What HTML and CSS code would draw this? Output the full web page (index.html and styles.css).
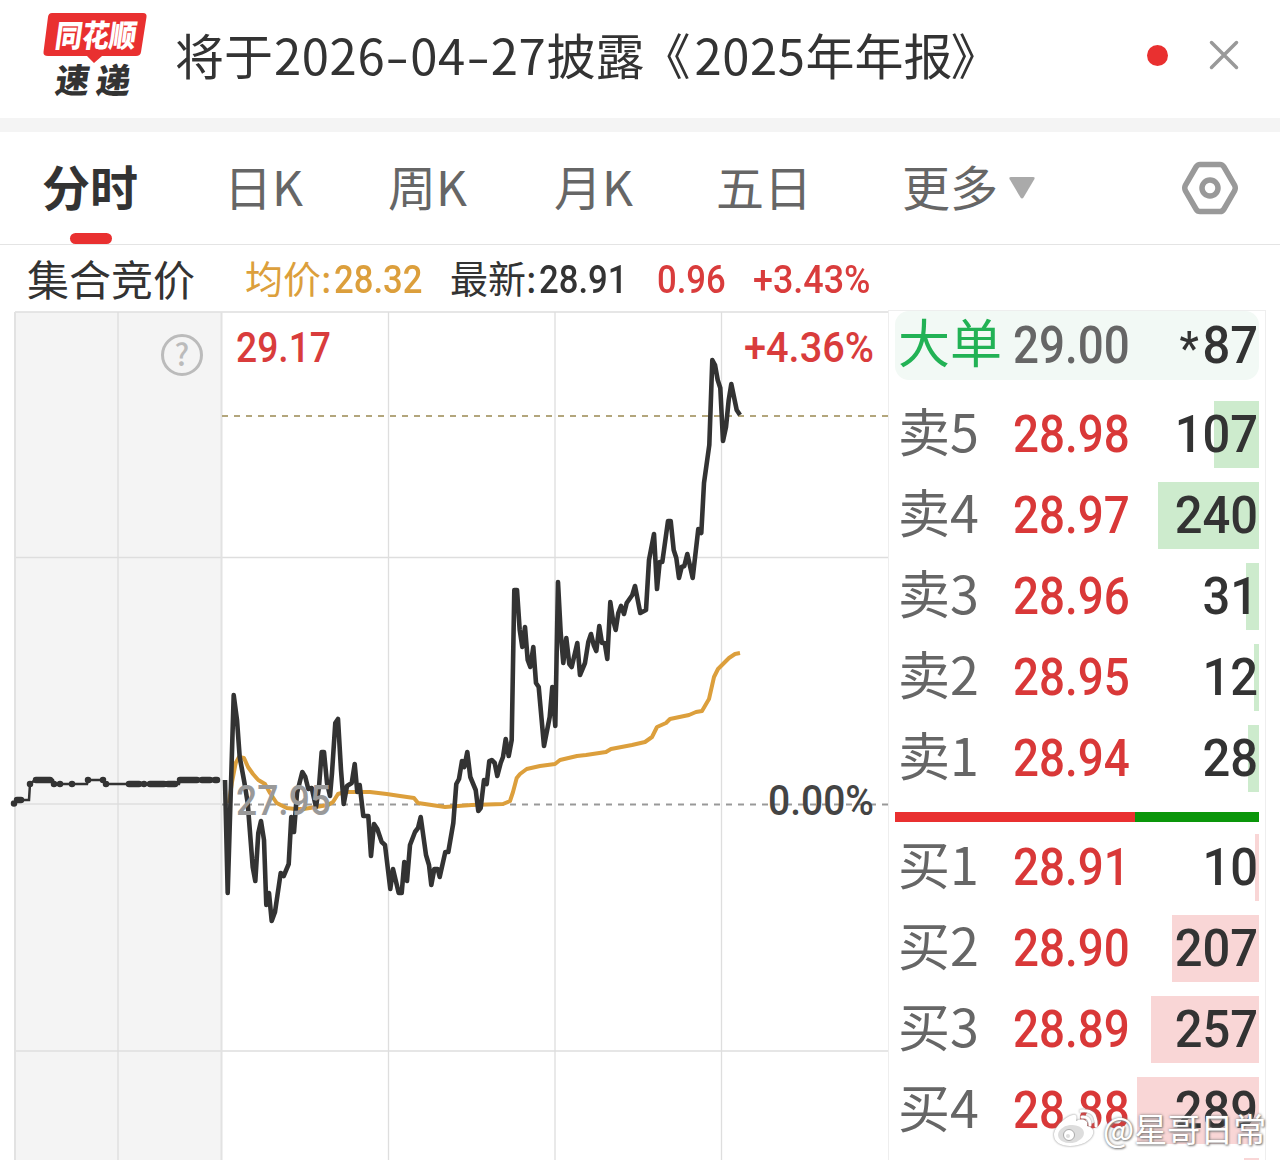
FILE: index.html
```html
<!DOCTYPE html>
<html lang="zh-CN">
<head>
  <meta charset="UTF-8">
  <meta name="viewport" content="width=device-width, initial-scale=1.0">
  <title>分时</title>
  <link rel="stylesheet" href="styles.css">
</head>
<body>
  <header class="notice">
    <svg class="logo" width="106" height="90" viewBox="0 0 106 90">
      <path class="logo-bubble" d="M10 3H101Q105 3 104.500 7L99 42Q98.500 46 94 46H60L52 53L45 46H6Q1 46 1.500 42L6 7Q6.500 3 10 3Z"/>
      <text class="logo-top" transform="translate(12 37) skewX(-8)" textLength="81" lengthAdjust="spacingAndGlyphs">同花顺</text>
      <text class="logo-bottom" transform="translate(12 83) skewX(-8)" textLength="34" lengthAdjust="spacingAndGlyphs">速</text>
      <text class="logo-bottom" transform="translate(53 83) skewX(-8)" textLength="34" lengthAdjust="spacingAndGlyphs">递</text>
    </svg>
    <p class="notice-text">将于<span class="date">2026<i>-</i>04<i>-</i>27</span>披露<span class="quote-open">《</span><span class="date">2025</span>年年报<span class="quote-close">》</span></p>
    <span class="dot"></span>
    <svg class="close" width="30" height="30" viewBox="0 0 30 30"><path d="M2.500 2.500L27.500 27.500M27.500 2.500L2.500 27.500"/></svg>
  </header>

  <nav class="tabs">
    <a class="tab active">分时</a>
    <a class="tab">日K</a>
    <a class="tab">周K</a>
    <a class="tab">月K</a>
    <a class="tab">五日</a>
    <a class="tab more">更多<svg width="26" height="22" viewBox="0 0 26 22"><path d="M2 0H24Q26.500 0 25.300 2.300L14.500 20.500Q13 22.500 11.500 20.500L.7 2.300Q-.5 0 2 0Z"/></svg></a>
    <svg class="settings" width="58" height="54" viewBox="0 0 58 54">
      <path d="M19 3.500H39Q41.500 3.500 43 6L53.500 24Q55 27 53.500 30L43 48Q41.500 50.500 39 50.500H19Q16.500 50.500 15 48L4.500 30Q3 27 4.500 24L15 6Q16.500 3.500 19 3.500Z"/>
      <circle cx="29" cy="27" r="8"/>
    </svg>
  </nav>

  <div class="summary">
    <span class="auction">集合竞价</span>
    <span class="average">均价:<b>28.32</b></span>
    <span class="latest">最新:<b>28.91</b></span>
    <span class="change"><b>0.96</b></span>
    <span class="percent"><b>+3.43%</b></span>
  </div>

  <main class="quote-body">
    <svg class="chart" width="888" height="850" viewBox="0 310 888 850">
      <!-- call auction area -->
      <rect class="auction-bg" x="15" y="312" width="206" height="860"/>
      <path class="grid" d="M15 312H888M15 557.500H888M15 804H222M15 1051H888M118 312V1160M388.500 312V1160M555 312V1160M721.500 312V1160"/>
      <path class="grid-strong" d="M15 312V1160M221.500 312V1160"/>
      <path class="dash latest-dash" d="M222 416H888"/>
      <path class="dash" d="M222 804.500H888"/>

      <g class="help">
        <circle cx="182" cy="355" r="19.500"/>
        <text x="182" y="365.500" text-anchor="middle">?</text>
      </g>

      <polyline class="auction-line" points="14,803 17,800 29,800 30,784 35,780 53,780 54,784 87,784 88,780 103,780 106,784 179,784 180,780 218,780"/>
      <path class="auction-dots" d="M14 803.500h0M17 800h4M30 784h0M36 780h14M54 784h0M60 784h0M72 784h0M88 780h0M103 780h0M106 784h0M129 784h10M144 784h0M150 784h14M168 784h7M180 780h17M202 780h8M215 780h2"/>

      <polyline class="average-line" points="229,803 232,782 235.700,763 239,757 244,758 248,767 253,774 258.300,780 265,784 270,793 276.700,803 286.700,808 295,809 303.300,809 316,807 328,805 333,802 338,794 345,792 355,792 370,792 386.700,794 400,796 414,798 418,803 445,807 458,806 471.700,805 503,804 510,801 513,792 516.700,778 520,774 526.700,769 540,766 555,764 560,760 577,756 586,755 606,752 611,749 632,745 645,742 652,737 657,727 666,723 670,719 689,715 696,712 702,711 709,699 714,677 718,669 729,658 735,654 740,653"/>
      <polyline class="price-line" points="225,780 227.700,893 233.700,695 237,720 239.700,757 244.300,782 247.700,803 252.700,867 255.300,881 258.300,833 261,821 264,840 266.300,905 269,893 271.700,921 275,912 280.700,873 283.700,876 288.700,864 291.300,817 294,832 297,793 302.300,772 305.300,777 308.300,789 311.700,788 316,807 319,787 321.700,752 324,752 327,783 330,796 332,773 335.300,723 338,719 341,770 343.700,804 347,786 351.700,783 354.700,764 357.300,792 359.700,785 363.300,816 368.300,816 371,856 374,824 377.300,829 381.700,842 385,845 390.300,889 393,869 398.700,893 401.700,893 404.300,862 407,881 410,845 415,832 418,828 420.700,817 426,855 429,865 431.300,885 434.300,869 437.700,869 439.700,877 445.300,852 448.300,852 453.300,823 456.300,784 459,779 462,761 464.300,767 467.300,752 470.300,777 475.700,790 478.300,811 480.700,808 484,780 486.700,784 489.300,761 491.700,760 494.700,763 497.300,776 500.700,763 503,757 505.700,739 508.700,756 511.700,740 514.300,590 517,590 519.700,630 522.300,647 525,627 527.700,660 530.300,667 533.300,647 536,683 538.700,687 544,746 549.700,717 552.300,687 555.300,726 558,582 560.700,633 563.300,663 566.300,638 569.300,664 571.700,667 577.300,643 580,675 585,663 588.300,642 591,634 593.700,645 596.300,651 599.300,626 602,643 604.700,643 607.300,659 610.300,602 613,620 615.700,630 618.300,613 621,606 624,614 626.700,603 632.300,595 635,586 640.300,613 646,610 649,560 654,534 657,589 659.700,562 662.300,562 668,521 670.700,521 673.700,550 676.300,558 679,578 681.700,567 684.300,566 687.300,554 692.700,578 698.300,529 701.300,533 704,483 709.300,445 712.300,360 715,365 717.700,380 720.300,388 723,441 726,427 728.700,400 731.300,384 736.700,410 740,415"/>

      <text class="axis up" x="236" y="362" textLength="95" lengthAdjust="spacingAndGlyphs">29.17</text>
      <text class="axis up" x="744" y="362" textLength="130" lengthAdjust="spacingAndGlyphs">+4.36%</text>
      <text class="axis base" x="236" y="815" textLength="95" lengthAdjust="spacingAndGlyphs">27.95</text>
      <text class="axis" x="768" y="815" textLength="106" lengthAdjust="spacingAndGlyphs">0.00%</text>
    </svg>

    <section class="book">
      <div class="big-order"><span class="label">大单</span><span class="price">29.00</span><span class="amount"><small>*</small>87</span></div>
      <div class="row sell"><span class="label">卖5</span><span class="price">28.98</span><span class="amount">107</span><span class="bar" style="width: 45px"></span></div>
      <div class="row sell"><span class="label">卖4</span><span class="price">28.97</span><span class="amount">240</span><span class="bar" style="width: 101px"></span></div>
      <div class="row sell"><span class="label">卖3</span><span class="price">28.96</span><span class="amount">31</span><span class="bar" style="width: 13px"></span></div>
      <div class="row sell"><span class="label">卖2</span><span class="price">28.95</span><span class="amount">12</span><span class="bar" style="width: 5px"></span></div>
      <div class="row sell"><span class="label">卖1</span><span class="price">28.94</span><span class="amount">28</span><span class="bar" style="width: 11px"></span></div>
      <div class="ratio"><span class="ratio-buy" style="width: 66%"></span></div>
      <div class="row buy"><span class="label">买1</span><span class="price">28.91</span><span class="amount">10</span><span class="bar" style="width: 4px"></span></div>
      <div class="row buy"><span class="label">买2</span><span class="price">28.90</span><span class="amount">207</span><span class="bar" style="width: 87px"></span></div>
      <div class="row buy"><span class="label">买3</span><span class="price">28.89</span><span class="amount">257</span><span class="bar" style="width: 108px"></span></div>
      <div class="row buy"><span class="label">买4</span><span class="price">28.88</span><span class="amount">289</span><span class="bar" style="width: 122px"></span></div>
      <div class="row buy"><span class="bar" style="width: 15px"></span></div>
    </section>
  </main>

  <div class="watermark">
    <svg width="46" height="38" viewBox="0 0 46 38">
      <path class="wb-body" d="M20 6C24 5 24 9 23 12C29 9 36 11 34 17C39 18 41 21 40 25C38 32 28 37 17 37C8 37 1 33 1 26C1 18 13 7 20 6Z"/>
      <ellipse class="wb-eye" cx="18" cy="25" rx="13" ry="9" transform="rotate(-8 18 25)"/>
      <circle class="wb-pupil" cx="16" cy="26" r="5.500"/>
      <circle class="wb-eye" cx="15" cy="27" r="2"/>
      <path class="wb-wave" d="M29 8Q37 7 37 16M28 2Q44 0 43 17"/>
    </svg>
    <span>@星哥日常</span>
  </div>
</body>
</html>
```
FILE: styles.css
```css
* {
  box-sizing: border-box;
}

body {
  position: relative;
  width: 1280px;
  height: 1160px;
  margin: 0;
  overflow: hidden;
  background: #fff;
  color: #333;
  font-family: 'Noto Sans CJK SC', sans-serif;
}

/* Top notice */
.notice {
  display: flex;
  align-items: center;
  height: 132px;
  padding: 0 41px 8px 42px;
  border-bottom: 14px solid #f4f4f4;
}

.logo {
  flex: none;
  margin-right: 27px;
  overflow: visible;
}

.logo-bubble {
  fill: #e93030;
}

.logo-top {
  fill: #fff;
  font-size: 31px;
  font-weight: 900;
}

.logo-bottom {
  fill: #333;
  font-size: 34px;
  font-weight: 900;
}

.notice-text {
  flex: 1;
  margin: -2px 0 0;
  font-size: 49px;
  line-height: 72px;
  white-space: nowrap;
}

.date {
  margin-left: 1px;
  letter-spacing: 0.6px;
}

.date i {
  display: inline-block;
  width: 25px;
  font-style: normal;
  text-align: center;
  transform: scaleX(1.4);
}

.quote-open {
  margin: 0 3px 0 -3px;
}

.quote-close {
  margin-left: -2px;
}

.dot {
  width: 21px;
  height: 21px;
  margin-right: 41px;
  border-radius: 50%;
  background: #e93030;
}

.close path {
  fill: none;
  stroke: #999;
  stroke-width: 3.5;
  stroke-linecap: round;
}

/* Period tabs */
.tabs {
  display: grid;
  grid-template-columns: 182px 164px 166px 162px 186px 279px 58px;
  align-items: center;
  height: 113px;
  padding-left: 42px;
  border-bottom: 1px solid #e4e4e4;
}

.tab {
  display: flex;
  flex-direction: column;
  align-items: flex-start;
  height: 112px;
  padding-top: 17px;
  color: #666;
  font-size: 48px;
  line-height: 72px;
}

.tab.active {
  color: #333;
  font-weight: 700;
}

.tab.active::after {
  content: '';
  width: 42px;
  height: 11px;
  margin: 12px 0 0 28px;
  border-radius: 6px;
  background: #e93030;
}

.tab.more {
  flex-direction: row;
}

.more svg {
  margin: 28px 0 0 11px;
  fill: #aaa;
}

.settings {
  fill: none;
  stroke: #999;
  stroke-width: 5.5;
}

/* Price summary */
.summary {
  display: flex;
  height: 65px;
  padding-left: 27px;
  font-size: 38px;
  line-height: 64px;
  white-space: nowrap;
}

.summary b {
  display: inline-block;
  margin-left: 2px;
  font-family: Roboto, sans-serif;
  font-size: 39px;
  font-weight: 500;
  transform: scaleX(0.89);
  transform-origin: left;
}

.auction {
  width: 218px;
  font-size: 42px;
  line-height: 66px;
}

.average {
  width: 205px;
  color: #dc9f3c;
}

.latest {
  width: 205px;
}

.change {
  width: 96px;
  color: #d93c3c;
}

.percent {
  color: #d93c3c;
}

.percent b {
  transform: scaleX(0.92);
}

.quote-body {
  display: flex;
}

/* Chart */
.chart {
  flex: none;
}

.auction-bg {
  fill: #f4f4f4;
}

.grid {
  fill: none;
  stroke: #dedede;
  stroke-width: 1.3;
}

.grid-strong {
  fill: none;
  stroke: #e2e2e2;
  stroke-width: 2;
}

.dash {
  fill: none;
  stroke: #999;
  stroke-width: 1.8;
  stroke-dasharray: 6 6;
}

.latest-dash {
  stroke: #b3a67c;
}

.help circle {
  fill: none;
  stroke: #bbb;
  stroke-width: 3;
}

.help text {
  fill: #bbb;
  font-size: 30px;
  font-weight: 500;
}

.auction-line {
  fill: none;
  stroke: #333;
  stroke-width: 2.5;
}

.auction-dots {
  fill: none;
  stroke: #333;
  stroke-width: 6.5;
  stroke-linecap: round;
}

.average-line {
  fill: none;
  stroke: #dc9f3c;
  stroke-width: 4;
  stroke-linejoin: round;
}

.price-line {
  fill: none;
  stroke: #333;
  stroke-width: 4.6;
  stroke-linejoin: round;
}

.axis {
  fill: #444;
  font-family: Roboto, sans-serif;
  font-size: 42px;
  font-weight: 500;
}

.axis.up {
  fill: #d93c3c;
}

.axis.base {
  fill: #999;
}

/* Order book */
.book {
  display: flex;
  flex-direction: column;
  width: 378px;
  height: 850px;
  padding: 0 6px;
  border: 1px solid #eee;
  border-bottom: 0;
  overflow: hidden;
}

.big-order,
.row {
  display: grid;
  flex: none;
  grid-template-columns: 115px 120px 1fr;
  align-items: center;
  padding: 0 1px 0 3px;
  line-height: 66px;
  white-space: nowrap;
}

.big-order {
  height: 69px;
  margin-bottom: 21px;
  border-radius: 14px;
  background: #f2f9f5;
}

.row {
  position: relative;
  height: 67px;
  margin-bottom: 14px;
}

.label {
  align-self: start;
  color: #666;
  font-size: 52px;
  line-height: 58px;
}

.big-order .label {
  color: #22b255;
  line-height: 60px;
}

.price,
.amount {
  z-index: 1;
  font-family: Roboto, sans-serif;
  font-size: 52px;
  font-weight: 500;
}

.price {
  color: #d93838;
  transform: scaleX(0.88);
  transform-origin: left;
}

.big-order .price {
  color: #666;
}

.amount {
  text-align: right;
  transform: scaleX(0.94);
  transform-origin: right;
}

.amount small {
  display: inline-block;
  margin-right: 4px;
  font-size: 46px;
  line-height: 40px;
  vertical-align: -1px;
}

/* volume bar behind the amount */
.bar {
  position: absolute;
  top: 0;
  right: 0;
  height: 67px;
}

.sell .bar {
  background: #cdebcd;
}

.buy .bar {
  background: #f9d6d6;
}

.ratio {
  flex: none;
  height: 10px;
  margin: 6px 0 12px;
  background: #0a960a;
}

.ratio-buy {
  display: block;
  height: 10px;
  background: #e93030;
}

/* Watermark */
.watermark {
  position: absolute;
  left: 1053px;
  top: 1106px;
  z-index: 2;
  display: flex;
  align-items: center;
  gap: 4px;
  color: #fff;
  font-size: 33px;
  line-height: 44px;
  white-space: nowrap;
  text-shadow: 0 0 3px #777, 1px 1px 2px #888;
}

.watermark svg {
  filter: drop-shadow(0 0 1px #888);
}

.wb-body,
.wb-pupil {
  fill: #fff;
}

.wb-pupil {
  stroke: #aaa;
}

.wb-eye {
  fill: #ddd;
}

.wb-wave {
  fill: none;
  stroke: #fff;
  stroke-width: 3;
  stroke-linecap: round;
}
```
